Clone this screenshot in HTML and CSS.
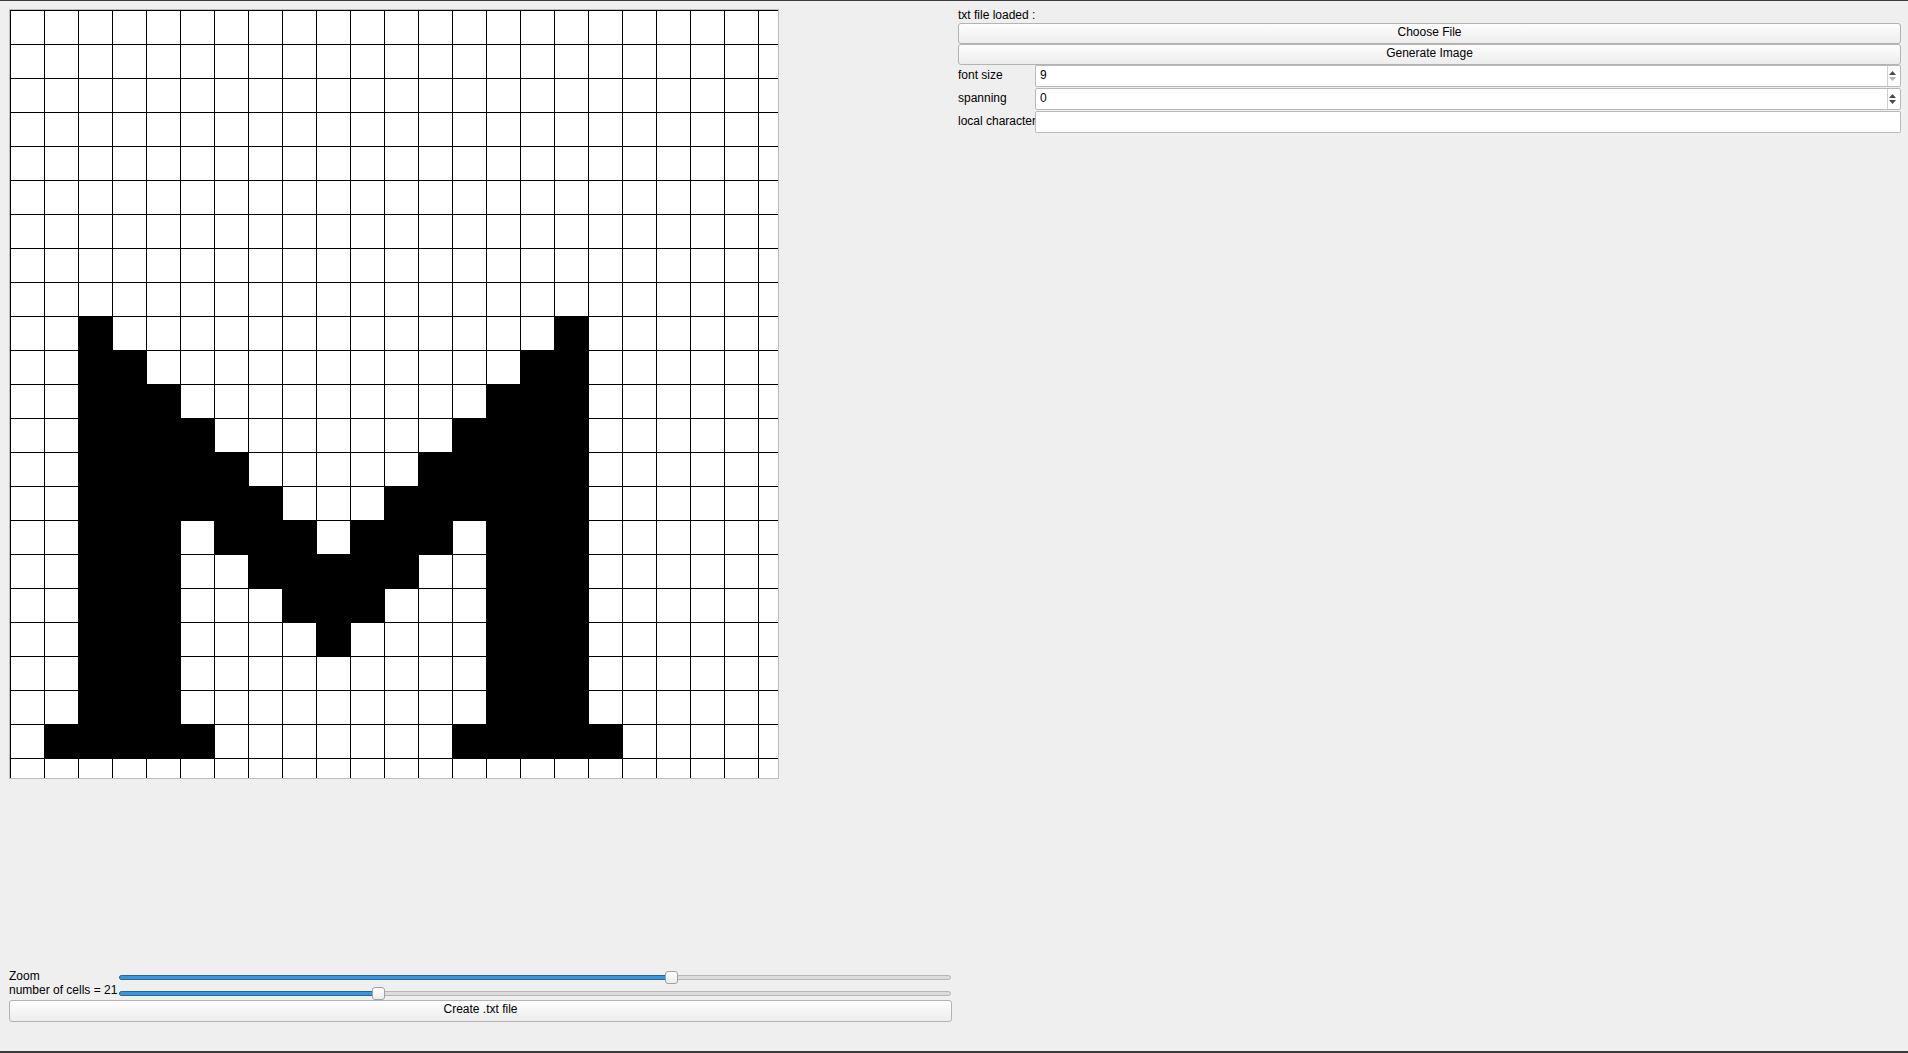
FILE: index.html
```html
<!DOCTYPE html>
<html lang="en">
<head>
<meta charset="utf-8">
<title>Pixel font editor</title>
<link rel="stylesheet" href="styles.css">
</head>
<body>
<main class="app">
  <section class="left">
    <div class="canvas">
      <svg class="grid" width="768" height="768" viewBox="0 0 768 768" shape-rendering="crispEdges">
        <defs>
          <pattern id="cell" width="34" height="34" patternUnits="userSpaceOnUse">
            <path d="M0.5 0V34M0 0.5H34" stroke="#000" stroke-width="1" fill="none"/>
          </pattern>
        </defs>
        <rect width="768" height="768" fill="#fff"/>
        <g fill="#000">
          <rect x="68" y="306" width="34" height="34"/><rect x="544" y="306" width="34" height="34"/>
          <rect x="68" y="340" width="68" height="34"/><rect x="510" y="340" width="68" height="34"/>
          <rect x="68" y="374" width="102" height="34"/><rect x="476" y="374" width="102" height="34"/>
          <rect x="68" y="408" width="136" height="34"/><rect x="442" y="408" width="136" height="34"/>
          <rect x="68" y="442" width="170" height="34"/><rect x="408" y="442" width="170" height="34"/>
          <rect x="68" y="476" width="204" height="34"/><rect x="374" y="476" width="204" height="34"/>
          <rect x="68" y="510" width="102" height="34"/><rect x="204" y="510" width="102" height="34"/><rect x="340" y="510" width="102" height="34"/><rect x="476" y="510" width="102" height="34"/>
          <rect x="68" y="544" width="102" height="34"/><rect x="238" y="544" width="170" height="34"/><rect x="476" y="544" width="102" height="34"/>
          <rect x="68" y="578" width="102" height="34"/><rect x="272" y="578" width="102" height="34"/><rect x="476" y="578" width="102" height="34"/>
          <rect x="68" y="612" width="102" height="34"/><rect x="306" y="612" width="34" height="34"/><rect x="476" y="612" width="102" height="34"/>
          <rect x="68" y="646" width="102" height="34"/><rect x="476" y="646" width="102" height="34"/>
          <rect x="68" y="680" width="102" height="34"/><rect x="476" y="680" width="102" height="34"/>
          <rect x="34" y="714" width="170" height="34"/><rect x="442" y="714" width="170" height="34"/>
        </g>
        <rect width="768" height="768" fill="url(#cell)"/>
      </svg>
    </div>
    <div class="spacer"></div>
    <div class="controls">
      <div class="ctl-labels">
        <div class="ctl-label">Zoom</div>
        <div class="ctl-label">number of cells = 21</div>
      </div>
      <div class="ctl-sliders">
        <div class="slider" style="--pos:0.6667">
          <div class="groove"><div class="fill"></div></div>
          <div class="handle"></div>
        </div>
        <div class="slider" style="--pos:0.3089">
          <div class="groove"><div class="fill"></div></div>
          <div class="handle"></div>
        </div>
      </div>
    </div>
    <button class="btn btn-create" type="button">Create .txt file</button>
  </section>

  <section class="right">
    <div class="file-label">txt file loaded :</div>
    <button class="btn btn-side" type="button">Choose File</button>
    <button class="btn btn-side" type="button">Generate Image</button>
    <div class="form">
      <div class="form-row">
        <label class="form-label">font size</label>
        <div class="spinbox">
          <input class="spin-input" type="text" value="9">
          <div class="spin-btns">
            <svg class="arrow" width="7" height="4" viewBox="0 0 7 4"><path d="M3.5 0L7 4H0Z" fill="#4a4a4a"/></svg>
            <svg class="arrow" width="7" height="4" viewBox="0 0 7 4"><path d="M0 0H7L3.5 4Z" fill="#b4b4b4"/></svg>
          </div>
        </div>
      </div>
      <div class="form-row">
        <label class="form-label">spanning</label>
        <div class="spinbox">
          <input class="spin-input" type="text" value="0">
          <div class="spin-btns">
            <svg class="arrow" width="7" height="4" viewBox="0 0 7 4"><path d="M3.5 0L7 4H0Z" fill="#4a4a4a"/></svg>
            <svg class="arrow" width="7" height="4" viewBox="0 0 7 4"><path d="M0 0H7L3.5 4Z" fill="#4a4a4a"/></svg>
          </div>
        </div>
      </div>
      <div class="form-row">
        <label class="form-label">local character</label>
        <input class="line-input" type="text" value="">
      </div>
    </div>
  </section>
</main>
</body>
</html>
```

FILE: styles.css
```css
* { box-sizing: border-box; }

html, body {
  margin: 0;
  padding: 0;
}

body {
  width: 1908px;
  height: 1053px;
  background: #efefef;
  border-top: 1px solid #3c3c3c;
  border-bottom: 2px solid #3c3c3c;
  font-family: "Liberation Sans", Arial, sans-serif;
  font-size: 12px;
  color: #000;
  overflow: hidden;
}

.app {
  display: flex;
  gap: 6px;
  height: 100%;
  padding: 8px 7px 29px 9px;
}

/* left column */
.left {
  width: 943px;
  display: flex;
  flex-direction: column;
}

.canvas {
  width: 770px;
  height: 770px;
  border: 1px solid #bdbdbd;
  background: #fff;
}

.grid { display: block; }

.spacer { flex: 1; }

.controls {
  display: flex;
  align-items: flex-start;
}

.ctl-labels {
  width: 108px;
  margin-right: 2px;
  display: flex;
  flex-direction: column;
}

.ctl-label {
  line-height: 14px;
  white-space: nowrap;
}

.ctl-sliders {
  flex: 1;
  margin-top: 2px;
  margin-right: 1px;
  display: flex;
  flex-direction: column;
  gap: 3px;
}

.slider {
  position: relative;
  height: 13px;
}

.groove {
  position: relative;
  margin-top: 4px;
  height: 5px;
  border: 1px solid #b6b6b6;
  border-radius: 3px;
  background: #dcdcdc;
}

.fill {
  position: absolute;
  left: -1px;
  top: -1px;
  height: 5px;
  width: calc((100% - 11px) * var(--pos) + 8px);
  border: 1px solid #22679f;
  border-radius: 3px;
  background: #3b95da;
}

.handle {
  position: absolute;
  top: 0;
  left: calc((100% - 13px) * var(--pos));
  width: 13px;
  height: 13px;
  border: 1px solid #a2a2a2;
  border-radius: 3px;
  background: linear-gradient(#ffffff, #ededed);
}

.btn {
  display: block;
  width: 100%;
  margin: 0;
  border: 1px solid #b3b3b3;
  border-radius: 3px;
  background: linear-gradient(#fdfdfd, #ededed);
  font-family: "Liberation Sans", Arial, sans-serif;
  font-size: 12px;
  color: #000;
  text-align: center;
  line-height: 14px;
  padding: 1px 0 0;
}

.btn-create {
  height: 22px;
  padding-bottom: 5px;
}

/* right column */
.right {
  width: 943px;
  display: flex;
  flex-direction: column;
}

.file-label {
  line-height: 12px;
  height: 12px;
  margin-bottom: 2px;
}

.btn-side {
  height: 21px;
  padding-bottom: 4px;
}

.form {
  display: flex;
  flex-direction: column;
  gap: 1px;
}

.form-row {
  display: flex;
  align-items: flex-start;
  height: 22px;
}

.form-label {
  width: 77px;
  flex: none;
  line-height: 20px;
  white-space: nowrap;
  overflow: hidden;
}

.spinbox {
  flex: 1;
  height: 22px;
  display: flex;
  border: 1px solid #bababa;
  border-radius: 2px;
  background: #fff;
}

.spin-input,
.line-input {
  font-family: "Liberation Sans", Arial, sans-serif;
  font-size: 12px;
  color: #000;
  outline: none;
  margin: 0;
}

.spin-input {
  flex: 1;
  min-width: 0;
  height: 20px;
  border: none;
  background: transparent;
  padding: 0 4px 3px 4px;
}

.spin-btns {
  width: 13px;
  flex: none;
  border-left: 1px solid #cfcfcf;
  display: flex;
  flex-direction: column;
  align-items: flex-start;
  justify-content: center;
  gap: 2px;
  padding-left: 1px;
}

.arrow { display: block; }

.line-input {
  flex: 1;
  min-width: 0;
  height: 22px;
  border: 1px solid #bababa;
  border-radius: 2px;
  background: #fff;
  padding: 0 4px 3px 5px;
}
```
